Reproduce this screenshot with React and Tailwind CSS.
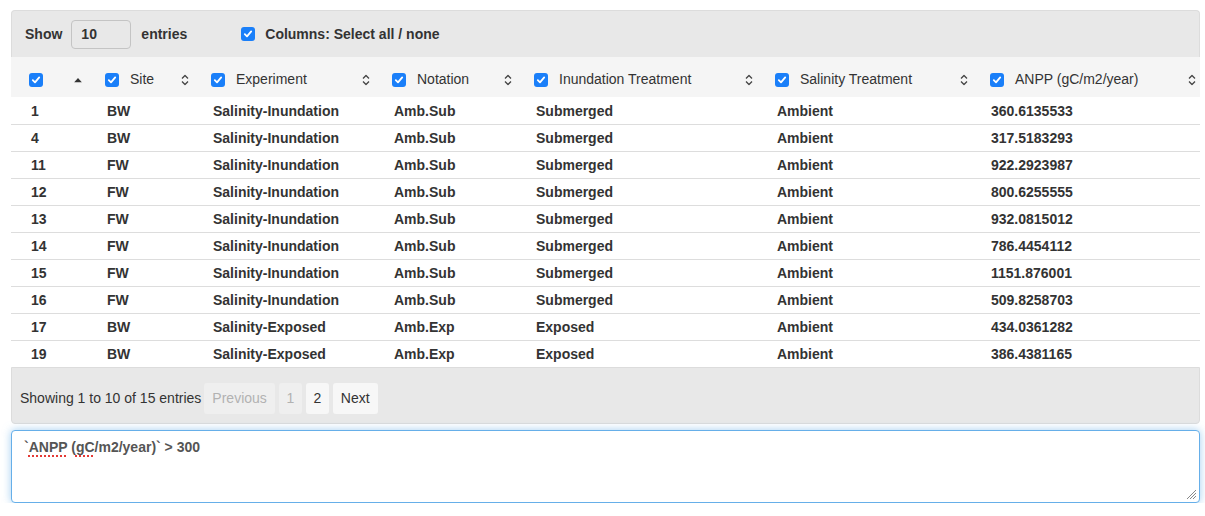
import React from 'react';

const COLS = [
    { key: 'id', label: '', w: 'w-[84px]', hp: 'pl-[18px]', dp: 'pl-[20px]' },
    { key: 'site', label: 'Site', w: 'w-[106px]', hp: 'pl-[10px]', dp: 'pl-[12px]' },
    { key: 'exp', label: 'Experiment', w: 'w-[181px]', hp: 'pl-[10px]', dp: 'pl-[12px]' },
    { key: 'not', label: 'Notation', w: 'w-[142px]', hp: 'pl-[10px]', dp: 'pl-[12px]' },
    { key: 'inu', label: 'Inundation Treatment', w: 'w-[241px]', hp: 'pl-[10px]', dp: 'pl-[12px]' },
    { key: 'sal', label: 'Salinity Treatment', w: 'w-[215px]', hp: 'pl-[10px]', dp: 'pl-[12px]' },
    { key: 'anpp', label: 'ANPP (gC/m2/year)', w: 'flex-1', hp: 'pl-[10px]', dp: 'pl-[11px]' },
];

const ROWS = [
    ['1', 'BW', 'Salinity-Inundation', 'Amb.Sub', 'Submerged', 'Ambient', '360.6135533'],
    ['4', 'BW', 'Salinity-Inundation', 'Amb.Sub', 'Submerged', 'Ambient', '317.5183293'],
    ['11', 'FW', 'Salinity-Inundation', 'Amb.Sub', 'Submerged', 'Ambient', '922.2923987'],
    ['12', 'FW', 'Salinity-Inundation', 'Amb.Sub', 'Submerged', 'Ambient', '800.6255555'],
    ['13', 'FW', 'Salinity-Inundation', 'Amb.Sub', 'Submerged', 'Ambient', '932.0815012'],
    ['14', 'FW', 'Salinity-Inundation', 'Amb.Sub', 'Submerged', 'Ambient', '786.4454112'],
    ['15', 'FW', 'Salinity-Inundation', 'Amb.Sub', 'Submerged', 'Ambient', '1151.876001'],
    ['16', 'FW', 'Salinity-Inundation', 'Amb.Sub', 'Submerged', 'Ambient', '509.8258703'],
    ['17', 'BW', 'Salinity-Exposed', 'Amb.Exp', 'Exposed', 'Ambient', '434.0361282'],
    ['19', 'BW', 'Salinity-Exposed', 'Amb.Exp', 'Exposed', 'Ambient', '386.4381165'],
];

function Check() {
    return (
        <span className="inline-flex h-[14px] w-[14px] shrink-0 items-center justify-center rounded-[3px] bg-[#1a7ff9]">
            <svg width="10" height="10" viewBox="0 0 10 10" fill="none">
                <path d="M1.8 5.2 L4 7.4 L8.2 2.4" stroke="white" strokeWidth="1.8" strokeLinecap="round" strokeLinejoin="round" />
            </svg>
        </span>
    );
}

function SortBoth() {
    return (
        <svg width="8" height="11" viewBox="0 0 8 11" fill="none">
            <path d="M1 4 L4 1 L7 4" stroke="#444" strokeWidth="1.3" />
            <path d="M1 7 L4 10 L7 7" stroke="#444" strokeWidth="1.3" />
        </svg>
    );
}

function SortAsc() {
    return (
        <svg width="8" height="5" viewBox="0 0 8 5">
            <path d="M0 5 L4 0.5 L8 5 Z" fill="#333" />
        </svg>
    );
}

export default function App() {
    return (
        <div className="px-[11px] pt-[10px] font-['Liberation_Sans',Arial,sans-serif] text-[14px] text-[#333]">
            <div className="w-[1189px]">
                {/* Top controls */}
                <div className="flex h-[47px] items-center rounded-t-[4px] border border-b-0 border-[#dcdcdc] bg-[#e8e8e8] pl-[13px] font-bold">
                    <span>Show</span>
                    <span className="ml-[9px] flex h-[29px] w-[60px] items-center rounded-[4px] border border-[#c4c4c4] bg-[#e8e8e8] pl-[9px]">10</span>
                    <span className="ml-[10px]">entries</span>
                    <span className="ml-[54px]"><Check /></span>
                    <span className="ml-[10px]">Columns: Select all / none</span>
                </div>

                {/* Header */}
                <div className="flex h-[40px] items-center bg-[#f5f5f5] pt-[5px]">
                    {COLS.map((c, i) => (
                        <div key={c.key} className={`relative flex h-full items-center ${c.w} ${c.hp}`}>
                            <Check />
                            {c.label && <span className="ml-[11px]">{c.label}</span>}
                            <span className={`absolute top-1/2 -translate-y-1/2 flex items-center ${i === 0 ? 'right-[13px]' : i === 6 ? 'right-[4px]' : 'right-[12px]'}`}>
                                {i === 0 ? <SortAsc /> : <SortBoth />}
                            </span>
                        </div>
                    ))}
                </div>

                {/* Body */}
                <div>
                    {ROWS.map((r, ri) => (
                        <div key={ri} className={`flex h-[27px] items-center pt-[1px] font-bold ${ri > 0 ? 'border-t border-[#dddddd]' : ''}`}>
                            {r.map((v, ci) => (
                                <div key={ci} className={`${COLS[ci].w} ${COLS[ci].dp}`}>{v}</div>
                            ))}
                        </div>
                    ))}
                </div>

                {/* Footer */}
                <div className="flex h-[57px] items-center rounded-b-[4px] border border-[#dcdcdc] bg-[#e8e8e8] pl-[8px] pt-[5px]">
                    <span>Showing 1 to 10 of 15 entries</span>
                    <div className="ml-[3px] flex gap-[4px]">
                        <span className="flex h-[31px] items-center rounded-[3px] bg-[#efefef] px-[8px] text-[#b2b2b2]">Previous</span>
                        <span className="flex h-[31px] w-[23px] items-center justify-center rounded-[3px] bg-[#efefef] text-[#b2b2b2]">1</span>
                        <span className="flex h-[31px] w-[23px] items-center justify-center rounded-[3px] bg-[#f7f7f7]">2</span>
                        <span className="flex h-[31px] items-center rounded-[3px] bg-[#f7f7f7] px-[8px]">Next</span>
                    </div>
                </div>

                {/* Query box */}
                <div className="relative mt-[6px] h-[73px] rounded-[4px] border border-[#66afe9] bg-white px-[12px] pt-[6px] font-bold text-[#555] shadow-[0_0_8px_rgba(102,175,233,0.6)]">
                    <span>`<span className="underline decoration-dotted decoration-[#e53935] decoration-2 underline-offset-[3px]">ANPP</span> (<span className="underline decoration-dotted decoration-[#e53935] decoration-2 underline-offset-[3px]">gC</span>/m2/year)` &gt; 300</span>
                    <svg className="absolute bottom-[2px] right-[2px]" width="11" height="11" viewBox="0 0 11 11">
                        <path d="M10 1 L1 10 M10 4 L4 10 M10 7 L7 10" stroke="#888" strokeWidth="1" />
                    </svg>
                </div>
            </div>
        </div>
    );
}
